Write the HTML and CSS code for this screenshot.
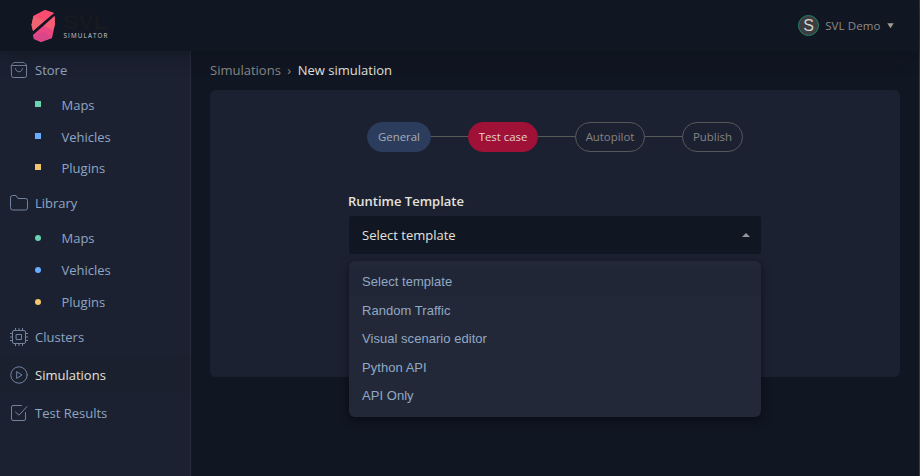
FILE: index.html
```html
<!DOCTYPE html>
<html lang="en">
<head>
<meta charset="utf-8">
<title>SVL Simulator</title>
<link rel="stylesheet" href="styles.css">
</head>
<body>
<div class="app">
  <header class="topbar">
    <svg class="logo" width="90" height="40" viewBox="0 0 90 40">
      <path d="M15 4L24 7L3 25L1.500 19L3.500 10Z" fill="#f4516f"/>
      <path d="M15 4L24 7L14 15L3.500 10Z" fill="#f94c70"/>
      <path d="M3.500 10L14 15L3 25L1.500 19Z" fill="#ee6471"/>
      <path d="M24.500 10L25 18L22 32L11 36L4 33L3 29Z" fill="#e94882"/>
      <path d="M24.500 10L25 18L23 24L14 20Z" fill="#f65c72"/>
      <path d="M3 29L14 26L22 32L11 36L4 33Z" fill="#d94689"/>
      <g transform="translate(33 23.400) scale(1.350 1)"><text class="logo-name" x="0" y="0" textLength="33" lengthAdjust="spacingAndGlyphs">SVL</text></g>
      <text class="logo-sub" x="33.500" y="31.800" textLength="44" lengthAdjust="spacing">SIMULATOR</text>
    </svg>
    <div class="user"><span class="avatar">S</span><span class="user-name">SVL Demo</span><svg class="caret" width="7" height="6"><path d="M.3.200H6.700L3.500 5.200Z" fill="#a39b90"/></svg></div>
  </header>
  <div class="body">
    <nav class="sidebar">
      <a class="item first"><svg class="icon" viewBox="0 0 18 18"><path d="M1.500 4L4 1.500H14L16.500 4V14.700Q16.500 16.500 14.700 16.500H3.300Q1.500 16.500 1.500 14.700ZM1.500 4.500H16.500M5.500 7.500C6 12 12 12 12.500 7.500"/></svg>Store</a>
      <a class="sub"><i class="mark green"></i>Maps</a>
      <a class="sub"><i class="mark blue"></i>Vehicles</a>
      <a class="sub last"><i class="mark yellow"></i>Plugins</a>
      <a class="item"><svg class="icon" viewBox="0 0 18 18"><path d="M.5 3.500Q.5 1.500 2.500 1.500H6L8 4.500H15.500Q17.500 4.500 17.500 6.500V14Q17.500 16 15.500 16H2.500Q.5 16 .5 14Z"/></svg>Library</a>
      <a class="sub"><i class="mark round green"></i>Maps</a>
      <a class="sub"><i class="mark round blue"></i>Vehicles</a>
      <a class="sub"><i class="mark round yellow"></i>Plugins</a>
      <a class="item low"><svg class="icon" viewBox="0 0 18 18"><rect x="2.500" y="2.500" width="13" height="13" rx="1.500"/><rect x="6.500" y="6.500" width="5" height="5"/><path d="M5.500 0V2.500M9 0V2.500M12.500 0V2.500M5.500 15.500V18M9 15.500V18M12.500 15.500V18M0 5.500H2.500M0 9H2.500M0 12.500H2.500M15.500 5.500H18M15.500 9H18M15.500 12.500H18"/></svg>Clusters</a>
      <a class="item low active"><svg class="icon" viewBox="0 0 18 18"><circle cx="9" cy="9" r="8.200"/><path d="M7 5.800L12 9L7 12.200Z"/></svg>Simulations</a>
      <a class="item low"><svg class="icon" viewBox="0 0 18 18"><path d="M11.500 1.500H3Q1.500 1.500 1.500 3V15Q1.500 16.500 3 16.500H14Q15.500 16.500 15.500 15V8.500M5.500 8L9 11.200L17 2.500"/></svg>Test Results</a>
    </nav>
    <main class="content">
      <div class="crumbs"><span>Simulations</span><span class="sep">›</span><span class="here">New simulation</span></div>
      <section class="panel">
        <div class="steps">
          <span class="step general">General</span><i class="line"></i>
          <span class="step case">Test case</span><i class="line"></i>
          <span class="step autopilot">Autopilot</span><i class="line"></i>
          <span class="step publish">Publish</span>
        </div>
        <div class="field">
          <div class="label">Runtime Template</div>
          <div class="select"><span>Select template</span><svg width="8" height="4"><path d="M0 4L4 0L8 4Z" fill="#96959b"/></svg></div>
          <div class="menu">
            <div class="option selected">Select template</div>
            <div class="option">Random Traffic</div>
            <div class="option">Visual scenario editor</div>
            <div class="option">Python API</div>
            <div class="option">API Only</div>
          </div>
        </div>
      </section>
    </main>
  </div>
</div>
</body>
</html>
```
FILE: styles.css
```css
* { box-sizing: border-box; }
body { margin: 0; background: #101622; font: 13px "Open Sans", sans-serif; overflow: hidden; }
.app { width: 920px; height: 476px; display: flex; flex-direction: column; border-right: 1px solid #3a3b42; }
.topbar { height: 51px; flex: none; display: flex; justify-content: space-between; padding: 6px 25px 0 30px; background: #101622; box-shadow: 0 2px 20px rgba(14, 20, 27, .8); position: relative; }
.logo { display: block; }
.logo-name { font: 700 20px "Liberation Sans", sans-serif; fill: #171a1e; }
.logo-sub { font: 500 6.300px "Open Sans", sans-serif; fill: #c9cbd0; }
.user { height: 39px; display: flex; align-items: center; color: #8f8a86; font-size: 11.500px; letter-spacing: .1px; }
.avatar { width: 21px; height: 21px; border: 1px solid #218565; border-radius: 50%; background: #3b3d41; color: #d6d2cd; font: 16px/19px "Liberation Sans", sans-serif; text-align: center; letter-spacing: 0; margin-right: 6px; }
.caret { margin-left: 6.500px; }
.body { flex: 1; display: flex; }
.sidebar { width: 191px; flex: none; background: #1c2132; border-right: 1px solid #292d39; color: #8ea6c3; }
.item { height: 38px; display: flex; align-items: center; padding: 1px 0 0 9.500px; }
.first { padding-top: 0; }
.low { padding-top: 2px; }
.icon { width: 18px; height: 18px; margin-right: 7.500px; fill: none; stroke: #71839f; stroke-width: 1; stroke-linejoin: round; stroke-linecap: round; }
.active { color: #e4e2dd; background: #1b202e; }
.sub { height: 31.667px; display: flex; align-items: center; padding: 1px 0 0 35px; }
.last { padding-top: 0; }
.mark { width: 6px; height: 6px; margin: -2px 20.500px 0 0; }
.round { border-radius: 50%; margin-top: 0; }
.green { background: #68d5ae; }
.blue { background: #69adff; }
.yellow { background: #f4c66c; }
.content { flex: 1; padding: 0 19px; }
.crumbs { height: 39px; display: flex; align-items: center; padding-bottom: 1px; color: #8b8886; }
.sep { margin: 0 6.500px; }
.here { color: #e4e2dd; }
.panel { height: 287px; border-radius: 6px; background: #1c2132; padding-top: 32px; }
.steps { display: flex; align-items: center; justify-content: center; font-size: 11.400px; }
.step { height: 30px; border: 1px solid #555858; border-radius: 15px; display: flex; align-items: center; justify-content: center; padding-bottom: 2px; color: #858381; }
.general { width: 64px; background: #2c3c5d; border-color: #2c3c5d; color: #a9adb3; }
.case { width: 70px; background: #a01137; border-color: #a01137; color: #e5d0d3; }
.autopilot { width: 70px; }
.publish { width: 61px; }
.line { width: 37px; height: 1px; background: #555b57; margin-top: -1px; }
.field { width: 413px; margin: 39px auto 0; position: relative; left: -.5px; }
.label { height: 23px; line-height: 20px; color: #e4e2dd; font-weight: 600; }
.select { margin: 2px 0 0 1px; height: 38px; border-radius: 3px; background: #101622; color: #e4e2dd; display: flex; align-items: center; justify-content: space-between; padding: 0 11px 0 13px; }
.menu { position: absolute; top: 70px; left: 1px; width: 412px; height: 156px; padding-top: 6px; border-radius: 6px; background: #222837; color: #91a9c5; box-shadow: 0 3px 10px rgba(4, 7, 13, .6); font: 13px/30.500px "Liberation Sans", sans-serif; letter-spacing: .04px; }
.option { height: 28.500px; padding-left: 13px; }
.selected { background: #202635; }
```
